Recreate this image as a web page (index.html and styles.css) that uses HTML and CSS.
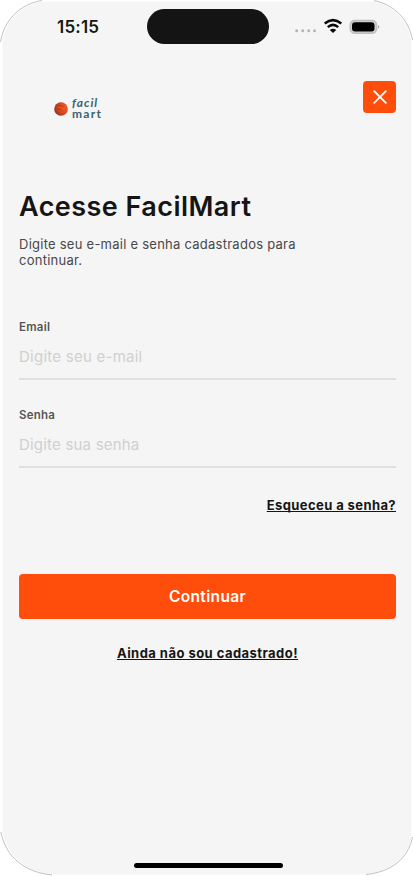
FILE: index.html
```html
<!DOCTYPE html>
<html lang="pt-BR">
<head>
<meta charset="utf-8">
<title>Acesse FacilMart</title>
<link rel="stylesheet" href="styles.css">
</head>
<body>
<div class="screen">
  <svg class="frame" viewBox="0 0 413 876" aria-hidden="true">
    <path class="frame-fill" d="M42 0H374C396 5 409 20 413 40V837C408 860 391 873 364 876H52C24 872 6 857 1 832V41C4 20 20 4 42 0Z"/>
    <path class="frame-edge" d="M42 .5C20 4 4 20 .5 42M374 .5C395 5 409 20 412.500 40M412.500 837C408 859 391 872 366 874.500M52 875C24 872 6 857 .8 832"/>
  </svg>
  <header class="status">
    <span class="time">15:15</span>
    <span class="island"></span>
    <svg class="signals" width="86" height="20" viewBox="294 16 86 20" aria-hidden="true">
      <g fill="#b5b5b5"><circle cx="296.700" cy="29.800" r="1.500"/><circle cx="302.700" cy="29.800" r="1.500"/><circle cx="308.700" cy="29.800" r="1.500"/><circle cx="314.500" cy="29.800" r="1.500"/></g>
      <g transform="translate(0 -.9)">
        <g fill="none" stroke="#0a0a0a" stroke-width="2.500"><path d="M324.700 23.400Q333 16.600 341.300 23.400"/><path d="M327.800 27Q333 22.600 338.200 27"/></g>
        <path d="M329.800 30Q333 27.200 336.200 30L333 33Z" fill="#0a0a0a"/>
        <rect x="350.300" y="20.500" width="26.200" height="12.500" rx="4.300" fill="#d5d5d5" stroke="#c0c0c0" stroke-width="1.600"/>
        <rect x="352" y="22.200" width="22.500" height="9.300" rx="3" fill="#000"/>
        <path d="M378 25q2.500 1.800 0 3.600z" fill="#aaa"/>
      </g>
    </svg>
  </header>
  <main class="content">
    <div class="top">
      <div class="brand">
        <svg width="14" height="14" viewBox="0 0 14 14" aria-hidden="true">
          <defs><radialGradient id="ball" cx=".72" cy=".4" r=".75"><stop offset="0" stop-color="#f05a28"/><stop offset=".5" stop-color="#e04a1c"/><stop offset="1" stop-color="#8e3020"/></radialGradient></defs>
          <circle cx="7" cy="7" r="6.800" fill="url(#ball)"/>
          <path d="M4 3.500Q7 3 9.500 5M3.500 7Q6 6 8.500 9.500" fill="none" stroke="#a5381f" stroke-width=".9"/>
        </svg>
        <span class="wordmark"><span class="word-a">facil</span><span class="word-b">mart</span></span>
      </div>
      <button class="close" aria-label="Fechar">
        <svg width="14" height="14" viewBox="0 0 14 14"><path d="M1.200 1.200 12.800 12.800M12.800 1.200 1.200 12.800" stroke="#fff" stroke-width="1.800" stroke-linecap="round"/></svg>
      </button>
    </div>
    <h1>Acesse FacilMart</h1>
    <p class="intro">Digite seu e-mail e senha cadastrados para<br>continuar.</p>
    <div class="field"><span class="label">Email</span><span class="hint">Digite seu e-mail</span></div>
    <div class="field"><span class="label">Senha</span><span class="hint hint-pass">Digite sua senha</span></div>
    <a class="link forgot">Esqueceu a senha?</a>
    <button class="submit">Continuar</button>
    <a class="link register">Ainda não sou cadastrado!</a>
  </main>
  <span class="home"></span>
</div>
</body>
</html>
```

FILE: styles.css
```css
* { box-sizing: border-box; }
body { margin: 0; background: #fff; font-family: Inter, "Liberation Sans", sans-serif; color: #151515; }
.screen { position: relative; width: 413px; height: 876px; overflow: hidden; display: flex; flex-direction: column; isolation: isolate; }
.frame { position: absolute; inset: 0; width: 413px; height: 876px; z-index: -1; }
.frame-fill { fill: #f5f5f5; stroke: #fff; stroke-width: 3; }
.frame-edge { fill: none; stroke: #c2c2c2; stroke-width: 1; }
.status { height: 53px; padding: 0 33px 0 57px; display: flex; align-items: center; }
.time { width: 90px; font-size: 17px; line-height: 20px; font-weight: 600; letter-spacing: .2px; }
.island { width: 122px; height: 35px; border-radius: 18px; background: #141414; }
.signals { margin-left: 25px; display: block; }
.content { flex: 1; padding: 28px 17px 0 19px; display: flex; flex-direction: column; }
.top { height: 50px; display: flex; justify-content: space-between; align-items: flex-start; }
.brand { display: flex; gap: 4px; margin: 16px 0 0 35px; align-items: center; }
.wordmark { display: flex; flex-direction: column; font: 700 12px/12px Lato, sans-serif; color: #3a6274; }
.word-a { letter-spacing: 1px; font-style: italic; }
.word-b { letter-spacing: 1.3px; margin-top: -1px; }
.close { width: 33px; height: 32px; padding: 0; border: 0; border-radius: 4px; background: #ff4e0c; display: grid; place-items: center; }
h1 { margin: 58px 0 0; font-size: 27px; line-height: 36px; font-weight: 600; letter-spacing: .45px; white-space: nowrap; }
.intro { margin: 11px 0 0; font-size: 13px; line-height: 16px; color: #484848; letter-spacing: .25px; white-space: nowrap; }
.field { height: 60px; margin-top: 28px; border-bottom: 2px solid #e0e0e0; display: flex; flex-direction: column; }
.intro + .field { margin-top: 52px; }
.label { font-size: 11.500px; line-height: 15px; font-weight: 600; color: #555; letter-spacing: .25px; }
.hint { margin-top: 12px; font-size: 15px; line-height: 20px; color: #d0d0d0; letter-spacing: .25px; }
.hint-pass { letter-spacing: .2px; }
.link { font-size: 13px; line-height: 18px; font-weight: 700; letter-spacing: .4px; text-decoration: underline; text-decoration-skip-ink: none; text-decoration-thickness: 1px; text-underline-offset: 1px; }
.forgot { align-self: flex-end; margin-top: 28px; }
.submit { height: 45px; margin-top: 60px; padding: 0; border: 0; border-radius: 4px; background: #ff4e0c; color: #fff; font: 600 15.500px/20px Inter, sans-serif; letter-spacing: .35px; }
.register { align-self: center; margin-top: 25px; letter-spacing: .46px; }
.home { align-self: center; width: 149px; height: 5px; margin: 0 0 8px 3px; border-radius: 3px; background: #000; }
```
